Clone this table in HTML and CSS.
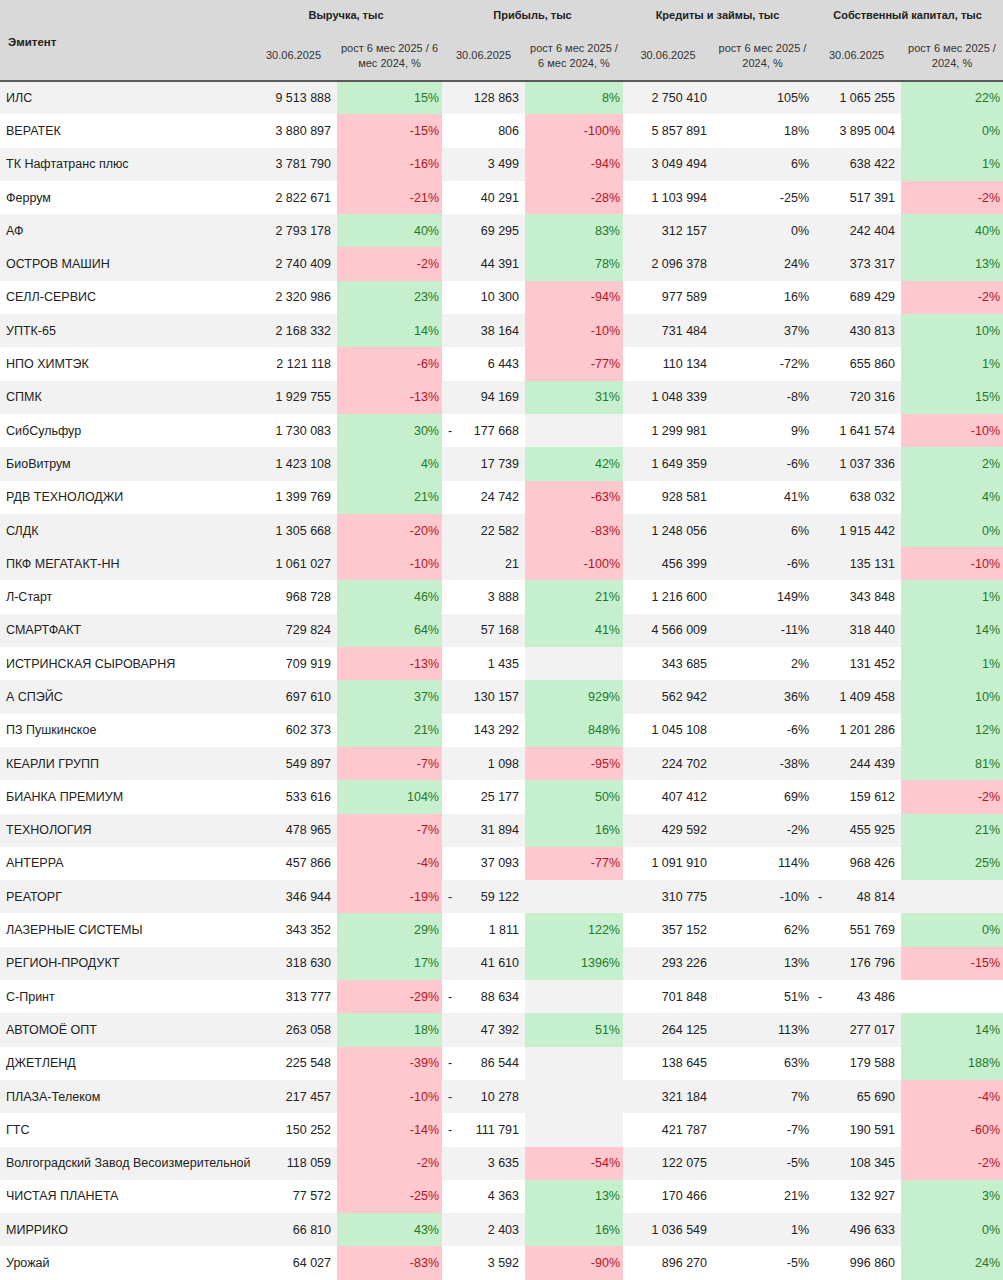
FILE: index.html
```html
<!DOCTYPE html>
<html lang="ru">
<head>
<meta charset="utf-8">
<title>Эмитенты</title>
<link rel="stylesheet" href="styles.css">
</head>
<body>
<table class="tbl">
<colgroup>
<col class="c-name"><col class="c-rev"><col class="c-revg"><col class="c-prof"><col class="c-profg"><col class="c-cred"><col class="c-credg"><col class="c-eq"><col class="c-eqg">
</colgroup>
<thead>
<tr class="h1">
<th class="hname" rowspan="2">Эмитент</th>
<th class="grp" colspan="2">Выручка, тыс</th>
<th class="grp" colspan="2">Прибыль, тыс</th>
<th class="grp" colspan="2">Кредиты и займы, тыс</th>
<th class="grp" colspan="2">Собственный капитал, тыс</th>
</tr>
<tr class="h2">
<th class="sub">30.06.2025</th><th class="sub">рост 6 мес 2025 / 6<br>мес 2024, %</th>
<th class="sub">30.06.2025</th><th class="sub">рост 6 мес 2025 /<br>6 мес 2024, %</th>
<th class="sub">30.06.2025</th><th class="sub">рост 6 мес 2025 /<br>2024, %</th>
<th class="sub">30.06.2025</th><th class="sub">рост 6 мес 2025 /<br>2024, %</th>
</tr>
</thead>
<tbody>
<tr class="g"><td class="n">ИЛС</td><td class="v">9 513 888</td><td class="p up">15%</td><td class="v">128 863</td><td class="p up">8%</td><td class="v">2 750 410</td><td class="p">105%</td><td class="v">1 065 255</td><td class="p up">22%</td></tr>
<tr><td class="n">ВЕРАТЕК</td><td class="v">3 880 897</td><td class="p dn">-15%</td><td class="v">806</td><td class="p dn">-100%</td><td class="v">5 857 891</td><td class="p">18%</td><td class="v">3 895 004</td><td class="p up">0%</td></tr>
<tr class="g"><td class="n">ТК Нафтатранс плюс</td><td class="v">3 781 790</td><td class="p dn">-16%</td><td class="v">3 499</td><td class="p dn">-94%</td><td class="v">3 049 494</td><td class="p">6%</td><td class="v">638 422</td><td class="p up">1%</td></tr>
<tr><td class="n">Феррум</td><td class="v">2 822 671</td><td class="p dn">-21%</td><td class="v">40 291</td><td class="p dn">-28%</td><td class="v">1 103 994</td><td class="p">-25%</td><td class="v">517 391</td><td class="p dn">-2%</td></tr>
<tr class="g"><td class="n">АФ</td><td class="v">2 793 178</td><td class="p up">40%</td><td class="v">69 295</td><td class="p up">83%</td><td class="v">312 157</td><td class="p">0%</td><td class="v">242 404</td><td class="p up">40%</td></tr>
<tr class="g"><td class="n">ОСТРОВ МАШИН</td><td class="v">2 740 409</td><td class="p dn">-2%</td><td class="v">44 391</td><td class="p up">78%</td><td class="v">2 096 378</td><td class="p">24%</td><td class="v">373 317</td><td class="p up">13%</td></tr>
<tr><td class="n">СЕЛЛ-СЕРВИС</td><td class="v">2 320 986</td><td class="p up">23%</td><td class="v">10 300</td><td class="p dn">-94%</td><td class="v">977 589</td><td class="p">16%</td><td class="v">689 429</td><td class="p dn">-2%</td></tr>
<tr class="g"><td class="n">УПТК-65</td><td class="v">2 168 332</td><td class="p up">14%</td><td class="v">38 164</td><td class="p dn">-10%</td><td class="v">731 484</td><td class="p">37%</td><td class="v">430 813</td><td class="p up">10%</td></tr>
<tr><td class="n">НПО ХИМТЭК</td><td class="v">2 121 118</td><td class="p dn">-6%</td><td class="v">6 443</td><td class="p dn">-77%</td><td class="v">110 134</td><td class="p">-72%</td><td class="v">655 860</td><td class="p up">1%</td></tr>
<tr class="g"><td class="n">СПМК</td><td class="v">1 929 755</td><td class="p dn">-13%</td><td class="v">94 169</td><td class="p up">31%</td><td class="v">1 048 339</td><td class="p">-8%</td><td class="v">720 316</td><td class="p up">15%</td></tr>
<tr><td class="n">СибСульфур</td><td class="v">1 730 083</td><td class="p up">30%</td><td class="v"><span class="minus">-</span>177 668</td><td class="p e"></td><td class="v">1 299 981</td><td class="p">9%</td><td class="v">1 641 574</td><td class="p dn">-10%</td></tr>
<tr class="g"><td class="n">БиоВитрум</td><td class="v">1 423 108</td><td class="p up">4%</td><td class="v">17 739</td><td class="p up">42%</td><td class="v">1 649 359</td><td class="p">-6%</td><td class="v">1 037 336</td><td class="p up">2%</td></tr>
<tr><td class="n">РДВ ТЕХНОЛОДЖИ</td><td class="v">1 399 769</td><td class="p up">21%</td><td class="v">24 742</td><td class="p dn">-63%</td><td class="v">928 581</td><td class="p">41%</td><td class="v">638 032</td><td class="p up">4%</td></tr>
<tr class="g"><td class="n">СЛДК</td><td class="v">1 305 668</td><td class="p dn">-20%</td><td class="v">22 582</td><td class="p dn">-83%</td><td class="v">1 248 056</td><td class="p">6%</td><td class="v">1 915 442</td><td class="p up">0%</td></tr>
<tr class="g"><td class="n">ПКФ МЕГАТАКТ-НН</td><td class="v">1 061 027</td><td class="p dn">-10%</td><td class="v">21</td><td class="p dn">-100%</td><td class="v">456 399</td><td class="p">-6%</td><td class="v">135 131</td><td class="p dn">-10%</td></tr>
<tr><td class="n">Л-Старт</td><td class="v">968 728</td><td class="p up">46%</td><td class="v">3 888</td><td class="p up">21%</td><td class="v">1 216 600</td><td class="p">149%</td><td class="v">343 848</td><td class="p up">1%</td></tr>
<tr class="g"><td class="n">СМАРТФАКТ</td><td class="v">729 824</td><td class="p up">64%</td><td class="v">57 168</td><td class="p up">41%</td><td class="v">4 566 009</td><td class="p">-11%</td><td class="v">318 440</td><td class="p up">14%</td></tr>
<tr><td class="n">ИСТРИНСКАЯ СЫРОВАРНЯ</td><td class="v">709 919</td><td class="p dn">-13%</td><td class="v">1 435</td><td class="p e"></td><td class="v">343 685</td><td class="p">2%</td><td class="v">131 452</td><td class="p up">1%</td></tr>
<tr class="g"><td class="n">А СПЭЙС</td><td class="v">697 610</td><td class="p up">37%</td><td class="v">130 157</td><td class="p up">929%</td><td class="v">562 942</td><td class="p">36%</td><td class="v">1 409 458</td><td class="p up">10%</td></tr>
<tr><td class="n">ПЗ Пушкинское</td><td class="v">602 373</td><td class="p up">21%</td><td class="v">143 292</td><td class="p up">848%</td><td class="v">1 045 108</td><td class="p">-6%</td><td class="v">1 201 286</td><td class="p up">12%</td></tr>
<tr class="g"><td class="n">КЕАРЛИ ГРУПП</td><td class="v">549 897</td><td class="p dn">-7%</td><td class="v">1 098</td><td class="p dn">-95%</td><td class="v">224 702</td><td class="p">-38%</td><td class="v">244 439</td><td class="p up">81%</td></tr>
<tr><td class="n">БИАНКА ПРЕМИУМ</td><td class="v">533 616</td><td class="p up">104%</td><td class="v">25 177</td><td class="p up">50%</td><td class="v">407 412</td><td class="p">69%</td><td class="v">159 612</td><td class="p dn">-2%</td></tr>
<tr class="g"><td class="n">ТЕХНОЛОГИЯ</td><td class="v">478 965</td><td class="p dn">-7%</td><td class="v">31 894</td><td class="p up">16%</td><td class="v">429 592</td><td class="p">-2%</td><td class="v">455 925</td><td class="p up">21%</td></tr>
<tr><td class="n">АНТЕРРА</td><td class="v">457 866</td><td class="p dn">-4%</td><td class="v">37 093</td><td class="p dn">-77%</td><td class="v">1 091 910</td><td class="p">114%</td><td class="v">968 426</td><td class="p up">25%</td></tr>
<tr class="g"><td class="n">РЕАТОРГ</td><td class="v">346 944</td><td class="p dn">-19%</td><td class="v"><span class="minus">-</span>59 122</td><td class="p e"></td><td class="v">310 775</td><td class="p">-10%</td><td class="v"><span class="minus">-</span>48 814</td><td class="p"></td></tr>
<tr><td class="n">ЛАЗЕРНЫЕ СИСТЕМЫ</td><td class="v">343 352</td><td class="p up">29%</td><td class="v">1 811</td><td class="p up">122%</td><td class="v">357 152</td><td class="p">62%</td><td class="v">551 769</td><td class="p up">0%</td></tr>
<tr class="g"><td class="n">РЕГИОН-ПРОДУКТ</td><td class="v">318 630</td><td class="p up">17%</td><td class="v">41 610</td><td class="p up">1396%</td><td class="v">293 226</td><td class="p">13%</td><td class="v">176 796</td><td class="p dn">-15%</td></tr>
<tr><td class="n">С-Принт</td><td class="v">313 777</td><td class="p dn">-29%</td><td class="v"><span class="minus">-</span>88 634</td><td class="p e"></td><td class="v">701 848</td><td class="p">51%</td><td class="v"><span class="minus">-</span>43 486</td><td class="p"></td></tr>
<tr class="g"><td class="n">АВТОМОЁ ОПТ</td><td class="v">263 058</td><td class="p up">18%</td><td class="v">47 392</td><td class="p up">51%</td><td class="v">264 125</td><td class="p">113%</td><td class="v">277 017</td><td class="p up">14%</td></tr>
<tr><td class="n">ДЖЕТЛЕНД</td><td class="v">225 548</td><td class="p dn">-39%</td><td class="v"><span class="minus">-</span>86 544</td><td class="p e"></td><td class="v">138 645</td><td class="p">63%</td><td class="v">179 588</td><td class="p up">188%</td></tr>
<tr class="g"><td class="n">ПЛАЗА-Телеком</td><td class="v">217 457</td><td class="p dn">-10%</td><td class="v"><span class="minus">-</span>10 278</td><td class="p e"></td><td class="v">321 184</td><td class="p">7%</td><td class="v">65 690</td><td class="p dn">-4%</td></tr>
<tr><td class="n">ГТС</td><td class="v">150 252</td><td class="p dn">-14%</td><td class="v"><span class="minus">-</span>111 791</td><td class="p e"></td><td class="v">421 787</td><td class="p">-7%</td><td class="v">190 591</td><td class="p dn">-60%</td></tr>
<tr class="g"><td class="n">Волгоградский Завод Весоизмерительной</td><td class="v">118 059</td><td class="p dn">-2%</td><td class="v">3 635</td><td class="p dn">-54%</td><td class="v">122 075</td><td class="p">-5%</td><td class="v">108 345</td><td class="p dn">-2%</td></tr>
<tr><td class="n">ЧИСТАЯ ПЛАНЕТА</td><td class="v">77 572</td><td class="p dn">-25%</td><td class="v">4 363</td><td class="p up">13%</td><td class="v">170 466</td><td class="p">21%</td><td class="v">132 927</td><td class="p up">3%</td></tr>
<tr class="g"><td class="n">МИРРИКО</td><td class="v">66 810</td><td class="p up">43%</td><td class="v">2 403</td><td class="p up">16%</td><td class="v">1 036 549</td><td class="p">1%</td><td class="v">496 633</td><td class="p up">0%</td></tr>
<tr><td class="n">Урожай</td><td class="v">64 027</td><td class="p dn">-83%</td><td class="v">3 592</td><td class="p dn">-90%</td><td class="v">896 270</td><td class="p">-5%</td><td class="v">996 860</td><td class="p up">24%</td></tr>
</tbody>
</table>
</body>
</html>
```
FILE: styles.css
```css
html, body {
  margin: 0;
  padding: 0;
  background: #ffffff;
}

body {
  font-family: "Liberation Sans", Arial, sans-serif;
  color: #222222;
}

.tbl {
  width: 1003px;
  table-layout: fixed;
  border-collapse: collapse;
  border-spacing: 0;
}

.c-name { width: 250px; }
.c-rev { width: 87px; }
.c-revg { width: 105px; }
.c-prof { width: 83px; }
.c-profg { width: 98px; }
.c-cred { width: 90px; }
.c-credg { width: 99px; }
.c-eq { width: 89px; }
.c-eqg { width: 102px; }

thead th {
  background: #d9d9d9;
  color: #222222;
  padding: 0;
  font-size: 11px;
  vertical-align: middle;
}

thead tr.h1 { height: 30px; }
thead tr.h2 { height: 51px; }

thead tr.h2 th {
  border-bottom: 2px solid #5a5a5a;
  padding-top: 1px;
}

.hname {
  text-align: left;
  padding-left: 8px;
  padding-top: 4px;
  font-weight: bold;
  font-size: 11.5px;
  border-bottom: 2px solid #5a5a5a;
}

.grp {
  font-weight: bold;
  text-align: center;
}

.sub {
  font-weight: normal;
  text-align: center;
  line-height: 15px;
  color: #333333;
}

tbody tr {
  height: 33.3px;
  background: #ffffff;
}

tbody tr.g {
  background: #f2f2f2;
}

tbody td {
  font-size: 12.5px;
  padding: 0;
  vertical-align: middle;
  white-space: nowrap;
  overflow: hidden;
}

td.n {
  text-align: left;
  padding-left: 6px;
  text-overflow: clip;
}

td.v {
  text-align: right;
  padding-right: 6px;
  padding-left: 6px;
}

td.p {
  text-align: right;
  padding-right: 3px;
}

td.up {
  background: #c6efce;
  color: #1f7a27;
}

td.dn {
  background: #ffc7ce;
  color: #b3141f;
}

td.e {
  background: #f2f2f2;
}

.minus {
  float: left;
}
```
